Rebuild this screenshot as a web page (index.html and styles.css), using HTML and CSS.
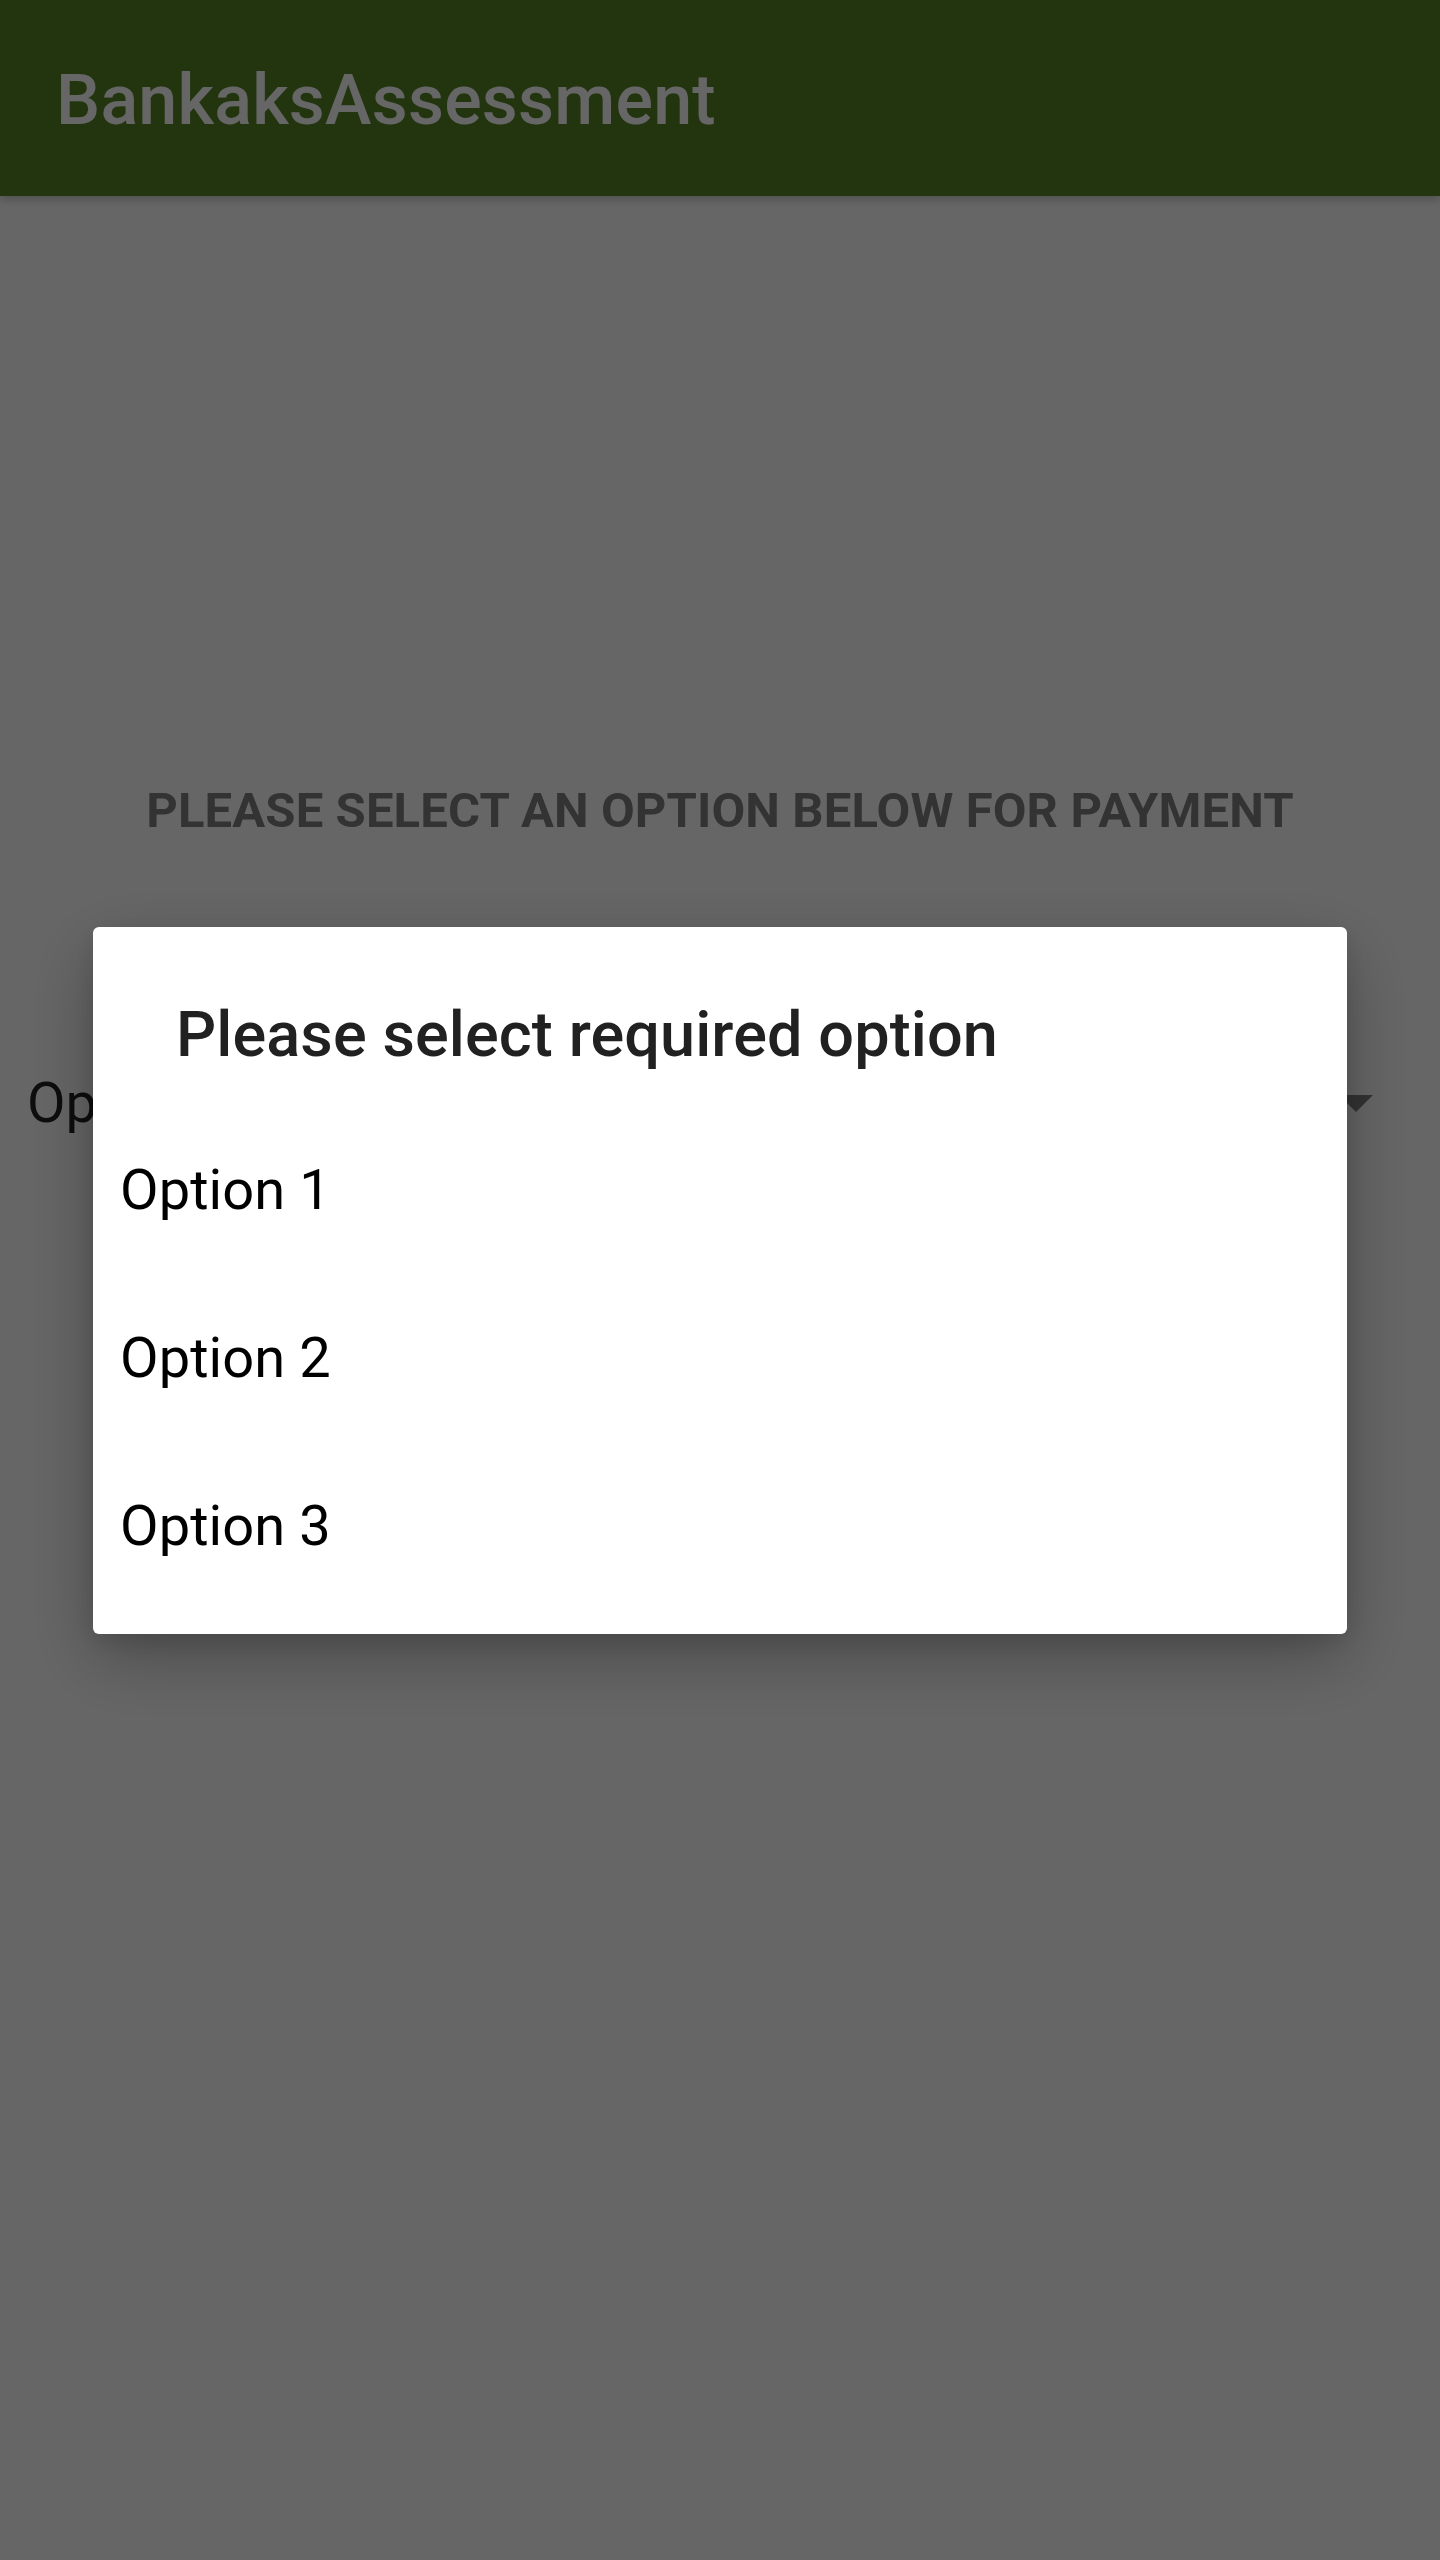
FILE: index.html
```html
<!DOCTYPE html>
<html lang="en">
<head>
<meta charset="utf-8">
<title>BankaksAssessment</title>
<link rel="stylesheet" href="styles.css">
</head>
<body>
  <header class="appbar">
    <h1 class="appbar-title">BankaksAssessment</h1>
  </header>
  <main class="content">
    <p class="prompt">PLEASE SELECT AN OPTION BELOW FOR PAYMENT</p>
    <div class="spinner">
      <span class="spinner-value">Option 1</span>
      <svg class="spinner-arrow" width="34" height="17" viewBox="0 0 34 17" aria-hidden="true"><path d="M0 0H34L17 17Z"/></svg>
    </div>
  </main>
  <div class="scrim">
    <div class="dialog" role="dialog" aria-label="Please select required option">
      <h2 class="dialog-title">Please select required option</h2>
      <ul class="option-list">
        <li class="option">Option 1</li>
        <li class="option">Option 2</li>
        <li class="option">Option 3</li>
      </ul>
    </div>
  </div>
</body>
</html>
```
FILE: styles.css
```css
* { box-sizing: border-box; }
html, body {
  margin: 0;
  padding: 0;
  height: 100%;
}
body {
  background: #ffffff;
  font-family: Roboto, "Noto Sans", "Liberation Sans", sans-serif;
  min-height: 2560px;
}
.appbar {
  height: 196px;
  background: #558526;
  display: flex;
  align-items: center;
  padding-left: 56px;
  box-shadow: 0 4px 8px rgba(0,0,0,0.2);
}
.appbar-title {
  margin: 0;
  font-size: 70px;
  font-weight: 500;
  letter-spacing: 0.2px;
  color: #ffffff;
  line-height: 1;
  padding-top: 4px;
}
.content {
  display: flex;
  flex-direction: column;
}
.prompt {
  margin: 586px 0 0;
  text-align: center;
  font-size: 49px;
  line-height: 57px;
  font-weight: 700;
  letter-spacing: 0.12px;
  color: #808080;
}
.spinner {
  margin-top: 231px;
  display: flex;
  align-items: center;
  justify-content: space-between;
  padding: 0 67px 0 27px;
  height: 66px;
}
.spinner-value {
  font-size: 56px;
  line-height: 66px;
  color: #212121;
}
.spinner-arrow {
  fill: #808080;
  display: block;
}
.scrim {
  position: fixed;
  inset: 0;
  background: rgba(0,0,0,0.6);
  display: flex;
  align-items: center;
  justify-content: center;
}
.dialog {
  width: 1254px;
  background: #ffffff;
  border-radius: 6px;
  padding: 68px 0 24px;
  box-shadow: 0 24px 70px rgba(0,0,0,0.28), 0 8px 24px rgba(0,0,0,0.12);
}
.dialog-title {
  margin: 0 0 31px;
  padding-left: 83px;
  font-size: 63px;
  line-height: 80px;
  font-weight: 500;
  letter-spacing: 0.1px;
  color: #212121;
}
.option-list {
  list-style: none;
  margin: 0;
  padding: 0;
}
.option {
  height: 168px;
  display: flex;
  align-items: center;
  padding-left: 27px;
  font-size: 56px;
  letter-spacing: 0.1px;
  color: #000000;
}
```
